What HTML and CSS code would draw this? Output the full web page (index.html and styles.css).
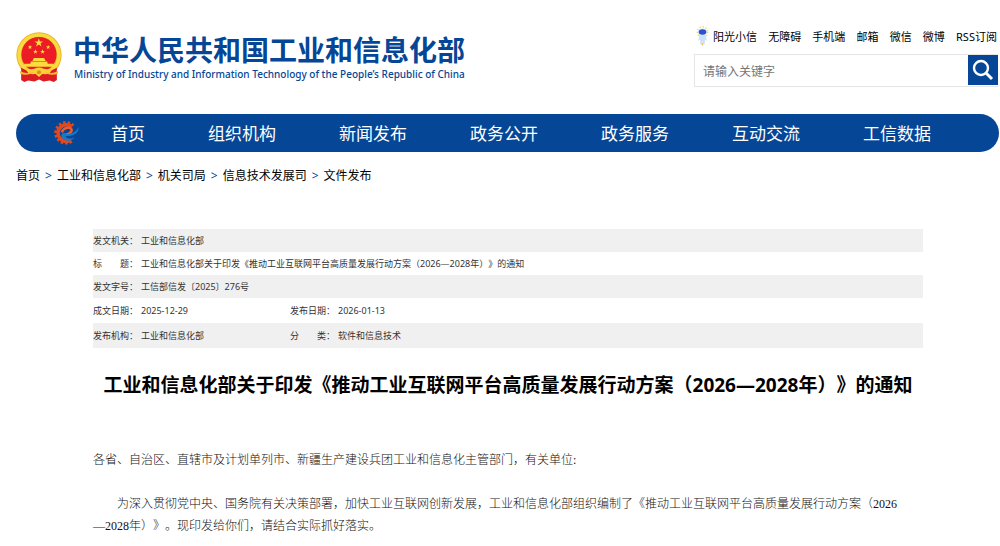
FILE: index.html
```html
<!DOCTYPE html>
<html lang="zh-CN">
<head>
  <meta charset="UTF-8" />
  <meta name="viewport" content="width=device-width, initial-scale=1.0"/>
  <title>工业和信息化部</title>
  <link rel="stylesheet" href="styles.css">
</head>
<body>
  <div class="page">
    <header class="header">
      <a class="logo" href="#">
        <svg class="emblem" viewBox="0 0 45 49" aria-hidden="true">
          <circle cx="22.5" cy="22.5" r="22.2" fill="#eab32a"/>
          <circle cx="22.5" cy="22.5" r="19.5" fill="none" stroke="#f9da3f" stroke-width="3.5"/>
          <circle cx="22.5" cy="22" r="17.2" fill="#ec1c24"/>
          <path d="M5 35L5 47L8 49L12 47.5L18 48.5L22.5 46.5L27 48.5L33 47.5L37 49L40 47L40 35L28 41H17Z" fill="#dc1c22"/>
          <g fill="#fbdc3c">
            <path d="M22.3 6.2L23.3 9.2H26.5L24 11.1L24.9 14.2L22.3 12.3L19.7 14.2L20.6 11.1L18.1 9.2H21.3Z"/>
            <path d="M13.7 12.5L14.3 14.1H16L14.6 15.1L15.1 16.8L13.7 15.8L12.3 16.8L12.8 15.1L11.4 14.1H13.1Z"/>
            <path d="M19 17L19.6 18.6H21.3L19.9 19.6L20.4 21.3L19 20.3L17.6 21.3L18.1 19.6L16.7 18.6H18.4Z"/>
            <path d="M26 17L26.6 18.6H28.3L26.9 19.6L27.4 21.3L26 20.3L24.6 21.3L25.1 19.6L23.7 18.6H25.4Z"/>
            <path d="M31.5 12.5L32.1 14.1H33.8L32.4 15.1L32.9 16.8L31.5 15.8L30.1 16.8L30.6 15.1L29.2 14.1H30.9Z"/>
            <path d="M17.5 25.5H27.5L29 28.3H16Z"/>
            <path d="M14.5 28.8H30.5L31 31.2H37V34H8V31.2H14Z"/>
          </g>
          <path d="M9 35.5Q14 37 18 36Q22.5 33.5 27 36Q31 37 36 35.5L33 40.5Q29 42 26 41L22.5 44L19 41Q16 42 12 40.5Z" fill="#f9d237"/>
          <path d="M4 38Q9 42 18 39L15 41Q9 43 4 41ZM41 38Q36 42 27 39L30 41Q36 43 41 41Z" fill="#f3bd2a"/>
          <circle cx="22.5" cy="39.5" r="2" fill="#ec8a20"/>
        </svg>
        <span class="logo-text">
          <span class="logo-cn">中华人民共和国工业和信息化部</span>
          <span class="logo-en" lang="en">Ministry of Industry and Information Technology of the People’s Republic of China</span>
        </span>
      </a>

      <div class="header-right">
        <div class="top-links">
          <a class="robot-link" href="#">
            <svg class="robot" viewBox="0 0 12 20" aria-hidden="true">
              <circle cx="6" cy="6" r="5.2" fill="none" stroke="#f6d24a" stroke-width="1.4" stroke-dasharray="1.2 1.8"/>
              <path d="M3 9H9L10.5 15L8.5 13.5L8 18.5H6.5L6 15L5.5 19H4L3.5 13.5L1.5 15Z" fill="#cfe0f5"/>
              <ellipse cx="6" cy="6" rx="4.3" ry="3.6" fill="#dbe6fa"/>
              <ellipse cx="6" cy="6" rx="3.8" ry="2.7" fill="#2853ce"/>
              <path d="M6 17V19.5" stroke="#f6c24a"/>
            </svg>
            阳光小信
          </a>
          <a href="#">无障碍</a>
          <a href="#">手机端</a>
          <a href="#">邮箱</a>
          <a href="#">微信</a>
          <a href="#">微博</a>
          <a href="#">RSS订阅</a>
        </div>
        <form class="search">
          <input type="text" name="q" placeholder="请输入关键字" aria-label="请输入关键字" />
          <button type="button" aria-label="搜索">
            <svg viewBox="0 0 30 30" aria-hidden="true">
              <circle cx="13" cy="13" r="7" fill="none" stroke="#fff" stroke-width="2.4"/>
              <path d="M18 18L24 24" stroke="#fff" stroke-width="3"/>
            </svg>
          </button>
        </form>
      </div>
    </header>

    <nav class="nav">
      <svg class="nav-icon" viewBox="0 0 24 24" aria-hidden="true">
        <path d="M17 19.5A9.8 9.8 0 1 1 18.5 4.5" fill="none" stroke="#e2481d" stroke-width="3" stroke-dasharray="2.4 1.8"/>
        <path d="M16 18.5A8 8 0 1 1 17 5.5" fill="none" stroke="#e2481d" stroke-width="3.4"/>
        <path d="M8 13.5C12 13.5 17 12 17 8.5C16 5 9 6 7.5 11" fill="none" stroke="#ee5a28" stroke-width="2.4"/>
        <path d="M23.5 5.5C24.5 11 19 15 11 14.5C12 17.5 17 17.5 20 15.5C16 21 7.5 19.5 7 14C7.5 11 10 11.5 11.5 12.5C17 13 22 10 23.5 5.5Z" fill="#1a78c8"/>
      </svg>
      <a href="#">首页</a>
      <a href="#">组织机构</a>
      <a href="#">新闻发布</a>
      <a href="#">政务公开</a>
      <a href="#">政务服务</a>
      <a href="#">互动交流</a>
      <a href="#">工信数据</a>
    </nav>

    <div class="breadcrumb">
      <a href="#">首页</a>
      <span>&gt;</span>
      <a href="#">工业和信息化部</a>
      <span>&gt;</span>
      <a href="#">机关司局</a>
      <span>&gt;</span>
      <a href="#">信息技术发展司</a>
      <span>&gt;</span>
      <a href="#">文件发布</a>
    </div>

    <main class="article">
      <table class="info">
        <tr>
          <th class="label" scope="row">发文机关：</th>
          <td colspan="3">工业和信息化部</td>
        </tr>
        <tr>
          <th class="label" scope="row">标　　题：</th>
          <td colspan="3">工业和信息化部关于印发《推动工业互联网平台高质量发展行动方案（2026—2028年）》的通知</td>
        </tr>
        <tr>
          <th class="label" scope="row">发文字号：</th>
          <td colspan="3">工信部信发〔2025〕276号</td>
        </tr>
        <tr>
          <th class="label" scope="row">成文日期：</th>
          <td class="first-value">2025-12-29</td>
          <th class="label" scope="row">发布日期：</th>
          <td>2026-01-13</td>
        </tr>
        <tr>
          <th class="label" scope="row">发布机构：</th>
          <td class="first-value">工业和信息化部</td>
          <th class="label" scope="row">分　　类：</th>
          <td>软件和信息技术</td>
        </tr>
      </table>

      <h1>工业和信息化部关于印发《推动工业互联网平台高质量发展行动方案（2026—2028年）》的通知</h1>

      <div class="content">
        <p>各省、自治区、直辖市及计划单列市、新疆生产建设兵团工业和信息化主管部门，有关单位:</p>
        <p class="indent">为深入贯彻党中央、国务院有关决策部署，加快工业互联网创新发展，工业和信息化部组织编制了《推动工业互联网平台高质量发展行动方案（2026<span class="nowrap">—2028年</span>）》。现印发给你们，请结合实际抓好落实。</p>
      </div>
    </main>
  </div>
</body>
</html>
```
FILE: styles.css
```css
:root {
  --primary: #054696;
  --text: #333333;
  --stripe: #f0f0f0;
}

* {
  box-sizing: border-box;
}

body {
  margin: 0;
  background: #fff;
  color: #000;
  font-family: "Noto Sans", "Noto Sans CJK SC", sans-serif;
  text-spacing-trim: space-all;
}

a {
  color: inherit;
  text-decoration: none;
}

.page {
  padding: 26px 1px 0 16px;
}

.header {
  display: flex;
  justify-content: space-between;
  height: 88px;
}

.logo {
  display: flex;
  align-items: flex-start;
  gap: 11px;
  padding-top: 6px;
  color: var(--primary);
}

.emblem {
  width: 46px;
  height: 50px;
}

.logo-text {
  display: flex;
  flex-direction: column;
  white-space: nowrap;
}

.logo-cn {
  font-size: 28px;
  font-weight: 700;
  line-height: 36px;
}

.logo-en {
  padding-left: 1px;
  font-size: 10px;
  font-weight: 500;
  line-height: 12px;
}

.header-right {
  width: 305px;
  padding-right: 1px;
}

.top-links {
  display: flex;
  justify-content: space-between;
  align-items: center;
  height: 20px;
  margin-bottom: 8px;
  padding: 0 1px 0 2px;
  font-size: 11px;
  white-space: nowrap;
}

.robot-link {
  display: flex;
  align-items: center;
  gap: 4px;
}

.robot {
  width: 13px;
  height: 20px;
}

.search {
  display: flex;
  height: 33px;
  border: 1px solid #e5e5e5;
  border-right: none;
}

.search input {
  flex: 1;
  min-width: 0;
  padding: 2px 8px 0;
  border: none;
  outline: none;
  font-family: inherit;
  font-size: 12px;
}

.search input::placeholder {
  color: #757575;
}

.search button {
  width: 30px;
  height: 30px;
  padding: 0;
  border: none;
  background: var(--primary);
  cursor: pointer;
}

.search svg {
  display: block;
}

.nav {
  display: flex;
  align-items: center;
  gap: 1px;
  height: 38px;
  padding-left: 38px;
  border-radius: 19px;
  background: var(--primary);
  color: #fff;
  font-size: 17px;
}

.nav a {
  padding: 0 31px 2px;
  white-space: nowrap;
}

.nav-icon {
  width: 25px;
  height: 25px;
}

.breadcrumb {
  display: flex;
  gap: 5px;
  padding-top: 15px;
  font-size: 12px;
  line-height: 18px;
}

.breadcrumb span {
  color: var(--primary);
}

.article {
  padding: 44px 76px 0 77px;
}

.info {
  width: 100%;
  border-collapse: collapse;
  color: var(--text);
  font-size: 9px;
  line-height: 13px;
}

.info tr:nth-child(odd) {
  background: var(--stripe);
}

.info th,
.info td {
  padding: 5px 0;
  font-weight: 400;
  text-align: left;
}

.info tr:nth-child(n+4) > * {
  padding: 6px 0;
}

.info .label {
  width: 48px;
}

.info .first-value {
  width: 149px;
}

h1 {
  margin: 23px 0 0;
  font-size: 19px;
  line-height: 28px;
  text-align: center;
}

.content {
  padding-top: 50px;
  color: #111;
  font-family: "Liberation Serif", "Noto Sans CJK SC", serif;
  font-size: 12px;
  font-weight: 300;
  line-height: 22px;
}

.content p {
  margin: 0 0 22px;
}

.indent {
  text-indent: 24px;
}

.nowrap {
  white-space: nowrap;
}
```
